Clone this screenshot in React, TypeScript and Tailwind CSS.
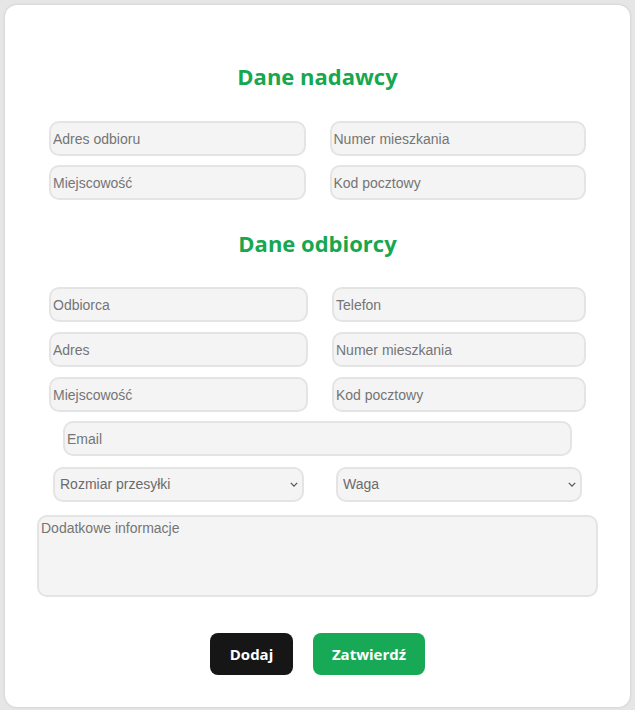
import React from "react";

const inputCls =
  "h-[35px] w-full rounded-[10px] border-2 border-[#e4e4e4] bg-[#f4f4f4] px-[2px] text-[14px] text-[#555] placeholder:text-[#757575] focus:outline-none";

function Input({ placeholder, className = "" }: { placeholder: string; className?: string }) {
  return <input type="text" placeholder={placeholder} className={`${inputCls} ${className}`} />;
}

function Select({ label, className = "" }: { label: string; className?: string }) {
  return (
    <div className={`relative h-[35px] ${className}`}>
      <select
        defaultValue=""
        className="h-full w-full appearance-none rounded-[10px] border-2 border-[#e4e4e4] bg-[#f4f4f4] px-[5px] text-[14px] text-[#6b6b6b] focus:outline-none"
      >
        <option value="" disabled>
          {label}
        </option>
      </select>
      <svg
        viewBox="0 0 10 6"
        className="pointer-events-none absolute right-[6px] top-[15px] h-[5px] w-[8px]"
        fill="none"
        stroke="#555"
        strokeWidth="1.6"
      >
        <path d="M1 1l4 4 4-4" />
      </svg>
    </div>
  );
}

function Heading({ children, className = "" }: { children: React.ReactNode; className?: string }) {
  return (
    <h2
      className={`text-center text-[22px] font-bold leading-[30px] text-[#17a74f] ${className}`}
      style={{ fontFamily: '"Open Sans", sans-serif' }}
    >
      {children}
    </h2>
  );
}

export default function App() {
  return (
    <div
      className="min-h-[710px] bg-[#e6e6e6] p-[5px]"
      style={{ fontFamily: '"Liberation Sans", Arial, sans-serif' }}
    >
      <div className="flex flex-col rounded-[12px] bg-white pb-[32px] pt-[56px] shadow-[0_0_3px_rgba(0,0,0,0.15)]">
        <Heading>Dane nadawcy</Heading>

        <div className="mx-[44px] mt-[30px] grid grid-cols-2 gap-x-[24px] gap-y-[9px]">
          <Input placeholder="Adres odbioru" />
          <Input placeholder="Numer mieszkania" />
          <Input placeholder="Miejscowość" />
          <Input placeholder="Kod pocztowy" />
        </div>

        <Heading className="mt-[28px]">Dane odbiorcy</Heading>

        <div className="mx-[44px] mt-[29px] grid grid-cols-[259px_254px] gap-x-[24px] gap-y-[10px]">
          <Input placeholder="Odbiorca" />
          <Input placeholder="Telefon" />
          <Input placeholder="Adres" />
          <Input placeholder="Numer mieszkania" />
          <Input placeholder="Miejscowość" />
          <Input placeholder="Kod pocztowy" />
        </div>

        <div className="mx-[58px] mt-[9px]">
          <Input placeholder="Email" />
        </div>

        <div className="mx-[48px] mt-[11px] grid grid-cols-[251px_246px] gap-x-[32px]">
          <Select label="Rozmiar przesyłki" />
          <Select label="Waga" />
        </div>

        <textarea
          placeholder="Dodatkowe informacje"
          className="mx-[32px] mt-[13px] h-[82px] resize-none rounded-[10px] border-2 border-[#e4e4e4] bg-[#f4f4f4] px-[2px] py-[1px] text-[14px] text-[#555] placeholder:text-[#757575] focus:outline-none"
        />

        <div
          className="mt-[36px] flex justify-center gap-[20px]"
          style={{ fontFamily: '"Open Sans", sans-serif' }}
        >
          <button className="h-[42px] w-[83px] rounded-[8px] bg-[#161616] text-[15px] font-bold text-white">
            Dodaj
          </button>
          <button className="h-[42px] w-[112px] rounded-[8px] bg-[#17a955] text-[15px] font-bold text-white">
            Zatwierdź
          </button>
        </div>
      </div>
    </div>
  );
}
